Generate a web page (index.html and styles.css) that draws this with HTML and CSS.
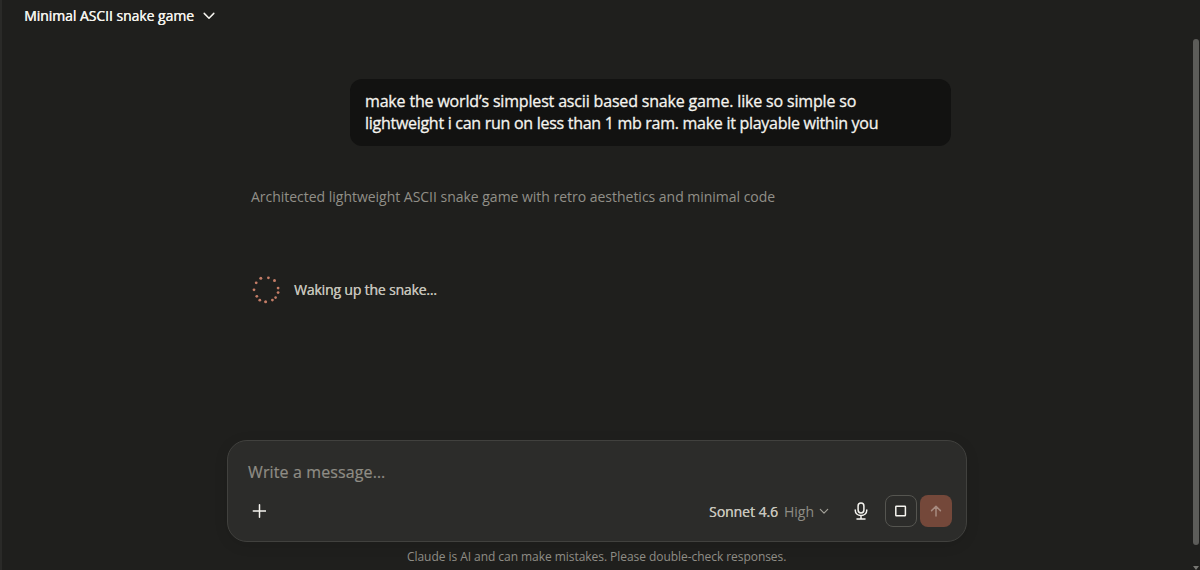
FILE: index.html
```
<!DOCTYPE html>
<html lang="en">
  <head>
    <meta charset="UTF-8" />
    <meta name="viewport" content="width=device-width, initial-scale=1.0" />
    <title>Minimal ASCII snake game</title>
    <link rel="stylesheet" href="styles.css">
  </head>
  <body>
    <div class="page">
      <header class="header">
        <span class="title">Minimal ASCII snake game</span>
        <svg class="title-arrow" width="12" height="8" viewBox="0 0 12 8"><path d="M1.2 1.4L6 6.2L10.8 1.4" /></svg>
      </header>

      <main class="chat">
        <div class="bubble">
          <span class="line1">make the world’s simplest ascii based snake game. like so simple so</span>
          <span class="line2">lightweight i can run on less than 1 mb ram. make it playable within you</span>
        </div>
        <div class="summary">Architected lightweight ASCII snake game with retro aesthetics and minimal code</div>
        <div class="status">
          <svg class="spinner" width="30" height="30" viewBox="0 0 30 30">
            <circle cx="9.8" cy="3.3" r="1.5" />
            <circle cx="17.4" cy="2.8" r="1.4" />
            <circle cx="23.5" cy="5.6" r="1.5" />
            <circle cx="27.1" cy="13.1" r="1.4" />
            <circle cx="27.1" cy="17.6" r="1.4" />
            <circle cx="24.6" cy="22.6" r="1.3" />
            <circle cx="21.4" cy="25.1" r="1.4" />
            <circle cx="14.6" cy="26.8" r="1.5" />
            <circle cx="8.8" cy="25.2" r="1.4" />
            <circle cx="5.8" cy="21.3" r="1.4" />
            <circle cx="3" cy="14.8" r="1.4" />
            <circle cx="5.2" cy="7.8" r="1.4" />
          </svg>
          <span class="status-text">Waking up the snake...</span>
        </div>
      </main>

      <footer class="footer">
        <div class="composer">
          <div class="placeholder"><span>Write a message…</span></div>
          <div class="toolbar">
            <svg class="plus" width="14" height="14" viewBox="0 0 14 14"><path d="M7.5 .8V13.2M1.3 7H13.7" /></svg>
            <div class="model">
              <span class="model-name">Sonnet 4.6</span>
              <span class="effort">High</span>
              <svg class="model-arrow" width="10" height="7" viewBox="0 0 10 7"><path d="M1.3 1.4L5 5.1L8.7 1.4" /></svg>
            </div>
            <svg class="mic" width="14" height="18" viewBox="0 0 14 18">
              <rect x="4.1" y="1" width="5.8" height="10" rx="2.9" />
              <path d="M1.2 8C1.2 11.4 3.7 13.5 7 13.5S12.8 11.4 12.8 8M7 13.5V17M3 17H11" />
            </svg>
            <div class="btn stop">
              <svg width="12" height="12" viewBox="0 0 12 12"><rect x=".8" y="1.2" width="9.6" height="9.6" rx=".6" /></svg>
            </div>
            <div class="btn send">
              <svg width="12" height="12" viewBox="0 0 12 12"><path d="M6 11V1.4M1.6 5.6L6 1.2L10.4 5.6" /></svg>
            </div>
          </div>
        </div>
        <div class="note"><span>Claude is AI and can make mistakes. Please double-check responses.</span></div>
      </footer>

      <div class="scrollbar"></div>
      <div class="scroll-down"></div>
    </div>
  </body>
</html>
```

FILE: styles.css
```
* {
  box-sizing: border-box;
}
body {
  margin: 0;
  background-color: #1f1f1d;
  font-family: "Open Sans", "Noto Sans", sans-serif;
}
.page {
  position: relative;
  display: flex;
  flex-direction: column;
  width: 1200px;
  height: 570px;
  overflow: hidden;
  border-left: 2px solid #2a2a28;
}
svg {
  display: block;
  flex: none;
  fill: none;
  stroke: #f5f4ef;
  stroke-width: 1.5;
  stroke-linecap: round;
  stroke-linejoin: round;
}
span {
  white-space: nowrap;
}
.header {
  display: flex;
  align-items: center;
  height: 31px;
  padding-left: 22px;
}
.title {
  width: 170px;
  margin-right: 9px;
  font-size: 14px;
  letter-spacing: -0.05px;
  color: #f5f4ef;
  text-shadow: 0.4px 0 0 #f5f4ef;
}
.chat {
  display: flex;
  flex-direction: column;
  flex: 1;
  width: 700px;
  margin-left: 249px;
  padding-top: 48px;
}
.bubble {
  display: flex;
  flex-direction: column;
  align-self: flex-end;
  width: 601px;
  height: 67px;
  padding: 11px 15px;
  border-radius: 12px;
  background-color: #121211;
  font-size: 16px;
  line-height: 22px;
  color: #f5f4ef;
  -webkit-text-stroke: 0.3px #f5f4ef;
}
.line1 {
  letter-spacing: -0.17px;
}
.line2 {
  letter-spacing: -0.28px;
}
.summary {
  margin-top: 41px;
  font-size: 14px;
  line-height: 20px;
  letter-spacing: -0.02px;
  color: #918f88;
}
.status {
  display: flex;
  align-items: center;
  height: 30px;
  margin-top: 67px;
}
.spinner {
  margin: 2px 13px 0 0;
}
.spinner circle {
  fill: #c47d67;
  stroke: none;
}
.status-text {
  font-size: 14px;
  letter-spacing: -0.17px;
  color: #c5c3ba;
  text-shadow: 0.3px 0 0 #c5c3ba;
}
.footer {
  width: 740px;
  margin-left: 225px;
}
.composer {
  height: 102px;
  padding: 19px 14px 14px 20px;
  border: 1px solid #41413e;
  border-radius: 20px;
  background-color: #2c2c2a;
  box-shadow: 0 3px 14px rgba(0, 0, 0, 0.1);
}
.placeholder {
  height: 24px;
  font-size: 16px;
  line-height: 24px;
  letter-spacing: 0.12px;
  color: #8f8d85;
  -webkit-text-stroke: 0.2px #8f8d85;
}
.toolbar {
  display: flex;
  align-items: center;
  height: 32px;
  margin-top: 11px;
}
.plus {
  margin-left: 4px;
}
.model {
  display: flex;
  align-items: center;
  margin-left: auto;
  font-size: 14px;
}
.model-name {
  width: 69px;
  margin-right: 6px;
  letter-spacing: -0.05px;
  color: #c8c6bd;
  text-shadow: 0.3px 0 0 #c8c6bd;
}
.effort {
  width: 30px;
  margin-right: 5px;
  color: #8f8d85;
}
.model-arrow {
  stroke: #a3a199;
  stroke-width: 1.2;
}
.mic {
  margin: 0 17px 0 25px;
}
.btn {
  display: flex;
  align-items: center;
  justify-content: center;
  width: 32px;
  height: 32px;
  border-radius: 8px;
}
.stop {
  margin-right: 3px;
  border: 1px solid #555550;
}
.send {
  background-color: #74483a;
}
.send svg {
  stroke: #a78b80;
}
.note {
  display: flex;
  height: 28px;
  padding-left: 180px;
  font-size: 12px;
  line-height: 29px;
  letter-spacing: -0.05px;
  color: #8f8d86;
}
.scrollbar {
  position: absolute;
  top: 39px;
  right: 1px;
  width: 6px;
  height: 506px;
  border-radius: 3px;
  background-color: #5c5c59;
}
.scroll-down {
  position: absolute;
  right: 1px;
  bottom: 0;
  border: 3px solid transparent;
  border-top: 4px solid #777773;
  border-bottom: 0;
}
```
